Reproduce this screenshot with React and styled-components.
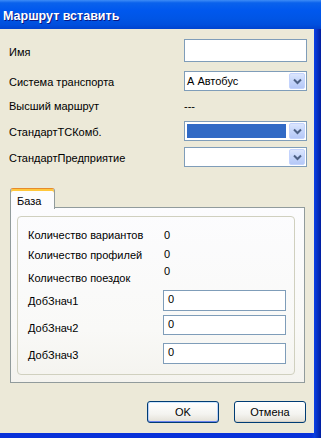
import styled, { createGlobalStyle } from "styled-components";

const GlobalStyle = createGlobalStyle`
	html, body {
		margin: 0;
		padding: 0;
		background: #ece9d8;
	}
	body {
		font-family: "Liberation Sans", Arial, sans-serif;
		font-size: 11px;
		color: #000;
	}
`;

const ChevronDown = () => (
	<svg width="9" height="7" viewBox="0 0 9 7">
		<path d="M1 1.5 L4.5 5 L8 1.5" fill="none" stroke="#4d6185" strokeWidth="2" />
	</svg>
);

const Combo = ({ value, selected }) => (
	<ComboBox>
		<ComboField>{selected ? <Selection /> : value}</ComboField>
		<ComboButton>
			<ChevronDown />
		</ComboButton>
	</ComboBox>
);

const App = () => {
	return (
		<>
			<GlobalStyle />
			<Window>
				<TitleBar>Маршрут вставить</TitleBar>
				<Client>
					<Form>
						<Row $h={32}>
							<Label $down={3}>Имя</Label>
							<TextBox $h={23} />
						</Row>
						<Row $h={25}>
							<Label $down={1}>Система транспорта</Label>
							<Combo value="А Автобус" />
						</Row>
						<Row $h={25}>
							<Label>Высший маршрут</Label>
							<Plain>---</Plain>
						</Row>
						<Row $h={26}>
							<Label $down={1}>СтандартТСКомб.</Label>
							<Combo selected />
						</Row>
						<Row $h={20}>
							<Label $down={1}>СтандартПредприятие</Label>
							<Combo />
						</Row>
					</Form>

					<Tabs>
						<TabStrip>
							<Tab>База</Tab>
						</TabStrip>
						<TabPanel>
							<GroupBox>
								<InfoRow $h={20}>
									<InfoLabel>Количество вариантов</InfoLabel>
									<InfoValue>0</InfoValue>
								</InfoRow>
								<InfoRow $h={20}>
									<InfoLabel>Количество профилей</InfoLabel>
									<InfoValue $up={1}>0</InfoValue>
								</InfoRow>
								<InfoRow $h={24}>
									<InfoLabel $down={3}>Количество поездок</InfoLabel>
									<InfoValue $up={4}>0</InfoValue>
								</InfoRow>
								<InfoRow $h={25}>
									<InfoLabel $down={2}>ДобЗнач1</InfoLabel>
									<TextBox $h={21} $w={123}>0</TextBox>
								</InfoRow>
								<InfoRow $h={28}>
									<InfoLabel $down={4}>ДобЗнач2</InfoLabel>
									<TextBox $h={20} $w={123}>0</TextBox>
								</InfoRow>
								<InfoRow $h={21}>
									<InfoLabel $down={3}>ДобЗнач3</InfoLabel>
									<TextBox $h={21} $w={123}>0</TextBox>
								</InfoRow>
							</GroupBox>
						</TabPanel>
					</Tabs>

					<Buttons>
						<Button $default>OK</Button>
						<Button>Отмена</Button>
					</Buttons>
				</Client>
			</Window>
		</>
	);
};

const Window = styled.div`
	width: 321px;
	height: 438px;
	display: flex;
	flex-direction: column;
	box-sizing: border-box;
	background: linear-gradient(to right, #0831d9 0%, #0831d9 97%, #0a3ee0 98%, #001ea0 100%);
	overflow: hidden;
`;

const TitleBar = styled.div`
	height: 29px;
	flex: none;
	display: flex;
	align-items: center;
	padding: 3px 0 0 3px;
	box-sizing: border-box;
	background: linear-gradient(
		to bottom,
		#3d8cf6 0%,
		#0a62ec 10%,
		#0058ee 35%,
		#0055e5 65%,
		#004fdd 85%,
		#0043cf 100%
	);
	color: #fff;
	font-family: "Liberation Sans", Arial, sans-serif;
	font-weight: bold;
	font-size: 12.5px;
	text-shadow: 1px 1px 0 #0a1883;
`;

const Client = styled.div`
	width: 314px;
	height: 404px;
	flex: none;
	background: #ece9d8;
	display: flex;
	flex-direction: column;
`;

const Form = styled.div`
	display: flex;
	flex-direction: column;
	padding: 10px 0 0 9px;
`;

const Row = styled.div`
	height: ${(p) => p.$h}px;
	display: grid;
	grid-template-columns: 175px 123px;
	align-items: start;
`;

const Label = styled.div`
	height: 20px;
	line-height: 20px;
	white-space: nowrap;
	transform: translateY(${(p) => p.$down || 0}px);
`;

const Plain = styled.div`
	height: 20px;
	line-height: 20px;
`;

const TextBox = styled.div`
	box-sizing: border-box;
	width: ${(p) => (p.$w ? `${p.$w}px` : "auto")};
	height: ${(p) => p.$h}px;
	border: 1px solid #7f9db9;
	background: #fff;
	padding: 2px 0 0 4px;
	line-height: 13px;
`;

const ComboBox = styled.div`
	box-sizing: border-box;
	height: 20px;
	border: 1px solid #7f9db9;
	background: #fff;
	display: flex;
	align-items: stretch;
	padding: 1px;
`;

const ComboField = styled.div`
	flex: 1;
	display: flex;
	align-items: center;
	padding: 1px 3px 1px 1px;
	line-height: 14px;
`;

const Selection = styled.div`
	flex: 1;
	align-self: stretch;
	background: #316ac5;
`;

const ComboButton = styled.div`
	width: 16px;
	box-sizing: border-box;
	border: 1px solid #c3d3fd;
	border-radius: 2px;
	background: linear-gradient(to bottom, #dce6fd 0%, #c7d7fb 45%, #b5c8f7 100%);
	display: flex;
	align-items: center;
	justify-content: center;
`;

const Tabs = styled.div`
	margin: 21px 0 0 10px;
	width: 295px;
	display: flex;
	flex-direction: column;
`;

const TabStrip = styled.div`
	display: flex;
	height: 20px;
	position: relative;
	z-index: 1;
	margin-bottom: -1px;
`;

const Tab = styled.div`
	width: 45px;
	box-sizing: border-box;
	height: 21px;
	background: #fcfcfe;
	border: 1px solid #919b9c;
	border-top: 1px solid #e68b2c;
	border-bottom: none;
	box-shadow: inset 0 2px 0 #ffc73c;
	border-radius: 3px 3px 0 0;
	padding: 5px 0 0 6px;
	line-height: 14px;
`;

const TabPanel = styled.div`
	height: 176px;
	box-sizing: border-box;
	border: 1px solid #919b9c;
	background: linear-gradient(to bottom, #fcfcfe 0%, #f9f9f7 70%, #f4f3ee 100%);
	padding: 8px 9px 0 6px;
	display: flex;
	flex-direction: column;
`;

const GroupBox = styled.div`
	height: 159px;
	box-sizing: border-box;
	border: 1px solid #d0d0bf;
	border-radius: 4px;
	padding: 9px 0 0 10px;
	display: flex;
	flex-direction: column;
`;

const InfoRow = styled.div`
	height: ${(p) => p.$h}px;
	display: grid;
	grid-template-columns: 135px 1fr;
	align-items: start;
`;

const InfoLabel = styled.div`
	line-height: 18px;
	white-space: nowrap;
	transform: translateY(${(p) => p.$down || 0}px);
`;

const InfoValue = styled.div`
	line-height: 18px;
	padding-left: 1px;
	transform: translateY(${(p) => -(p.$up || 0)}px);
`;

const Buttons = styled.div`
	display: flex;
	justify-content: flex-end;
	gap: 15px;
	padding: 18px 8px 0 0;
`;

const Button = styled.div`
	width: 72px;
	height: 22px;
	box-sizing: border-box;
	border: 1px solid #003c74;
	border-radius: 3px;
	background: linear-gradient(to bottom, #ffffff 0%, #f4f4f0 60%, #e3e0d6 100%);
	box-shadow: ${(p) =>
		p.$default
			? "inset 0 1px 0 #cee7ff, inset 0 -1px 0 #6982ee, inset 1px 0 0 #b8d0f8, inset -1px 0 0 #b8d0f8"
			: "inset 0 -1px 0 #d6d0c5"};
	display: flex;
	align-items: center;
	justify-content: center;
`;

export default App;
